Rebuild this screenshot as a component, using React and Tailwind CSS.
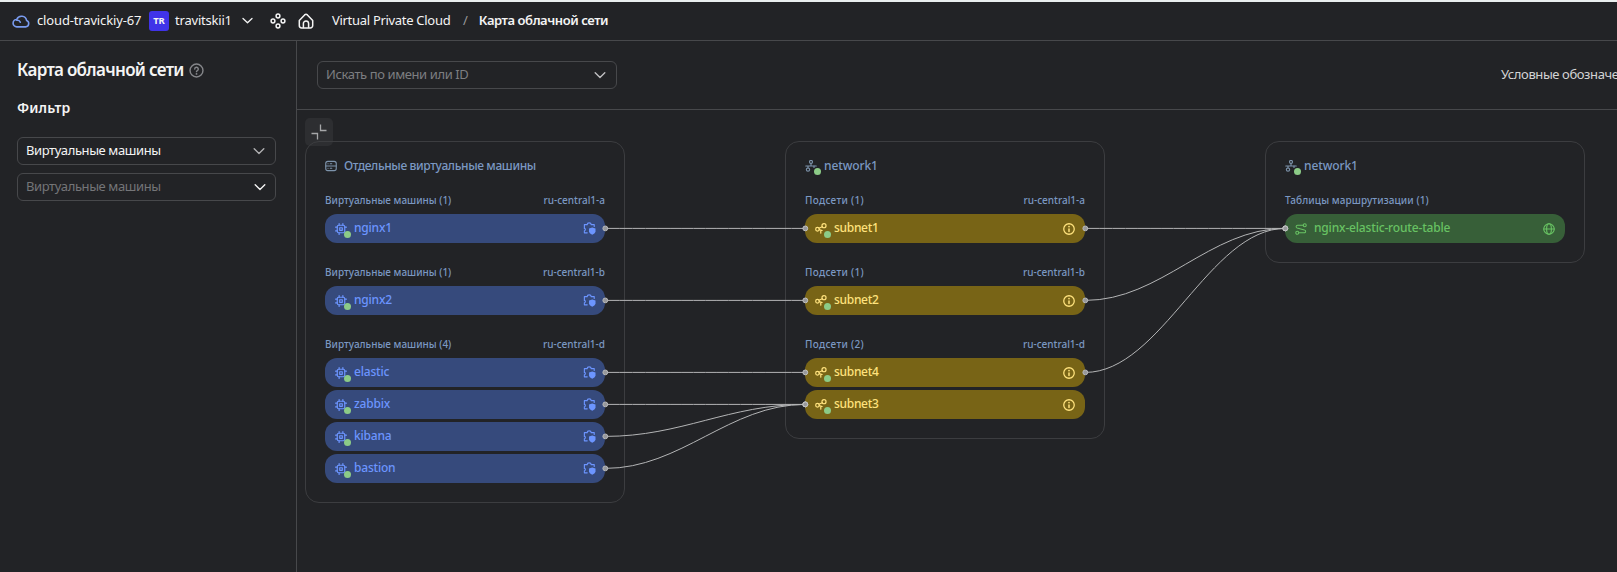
import React from 'react';

const ink = { fill: 'none', stroke: 'currentColor', strokeWidth: 1.4, strokeLinecap: 'round', strokeLinejoin: 'round' };

function Icon({ className = 'size-4', children, ...rest }) {
  return (
    <svg viewBox="0 0 16 16" className={`block shrink-0 ${className}`} {...ink} {...rest}>
      {children}
    </svg>
  );
}

const Chevron = ({ className }) => (
  <Icon className={className}>
    <path d="M3.2 5.8 8 10.4l4.8-4.6" />
  </Icon>
);

const CloudIcon = () => (
  <Icon className="size-[18px] text-[#7a9cf0]">
    <path d="M4.3 13.2h7.800a2.900 2.900 0 0 0 .9-5.600A4.600 4.600 0 0 0 4.200 6.600a3.300 3.300 0 0 0 .1 6.600Z" />
    <path d="M4.300 7.400c1.500-.2 2.700.5 3.100 1.700" />
  </Icon>
);

const ServicesIcon = () => (
  <Icon className="size-4" strokeWidth={1.5}>
    <circle cx="8" cy="3" r="1.9" />
    <circle cx="8" cy="13" r="1.9" />
    <circle cx="3" cy="8" r="1.9" />
    <circle cx="13" cy="8" r="1.9" />
  </Icon>
);

const HomeIcon = () => (
  <Icon className="size-4" strokeWidth={1.5}>
    <path d="M1.3 7.6 6.6 1.9a2 2 0 0 1 2.8 0l5.3 5.7v4.900a2.400 2.400 0 0 1-2.400 2.400H3.700a2.400 2.400 0 0 1-2.400-2.400Z" />
    <path d="M5.400 14.600V10.500a2.600 2.600 0 0 1 5.200 0v4.100" />
  </Icon>
);

const HelpIcon = () => (
  <Icon className="size-[15px] text-[#85868a]" strokeWidth={1.5}>
    <circle cx="8" cy="8" r="6.900" />
    <path d="M6.100 6.400a1.900 1.900 0 1 1 2.800 1.700c-.6.3-.9.6-.9 1.100" />
    <path d="M8 11.500v.1" strokeWidth="1.900" />
  </Icon>
);

const ServerIcon = () => (
  <Icon className="size-3 text-[#7d93ab]" strokeWidth={1.5}>
    <rect x="1" y="1.800" width="14" height="12.400" rx="2.800" />
    <path d="M1 8h14M4 5h.1M4 11h.1M7 5h2M7 11h2" />
  </Icon>
);

const NetworkIcon = () => (
  <Icon className="size-3 text-[#7d93ab]" strokeWidth={1.5}>
    <circle cx="8" cy="2.500" r="2" />
    <path d="M1 8h14M8 4.500V8M4 8v2.500" />
    <circle cx="4" cy="12.800" r="2.200" />
    <path d="M12 8v2" />
  </Icon>
);

const ChipIcon = () => (
  <Icon className="size-3" strokeWidth={1.600}>
    <rect x="3" y="3" width="10" height="10" rx="2" />
    <rect x="6.300" y="6.300" width="3.400" height="3.400" />
    <path d="M5.500 3V.8M10.500 3V.8M5.500 15.200V13M3 5.500H.8M3 10.500H.8M15.200 5.500H13" />
  </Icon>
);

const PuzzleShieldIcon = () => (
  <Icon className="size-[13px]" strokeWidth={1.400}>
    <path d="M5.200 13.300H1.700V10.800c1.600-.2 1.600-2.700 0-2.900V3.200h3.400c.2-2.800 4.800-2.800 5 0h3.700v2.200" />
    <path d="M11.400 6.800 15.400 8v3.400c0 2-1.600 3.300-4 4.300-2.400-1-4-2.300-4-4.300V8Z" fill="currentColor" stroke="none" />
  </Icon>
);

const SubnetIcon = () => (
  <Icon className="size-3" strokeWidth={1.600}>
    <circle cx="3.300" cy="8.300" r="2.400" />
    <circle cx="12" cy="3.600" r="2.700" />
    <path d="M5.400 7.100 9.600 4.900M5.700 8.900 9.500 10M7.600 9.600 7.800 13.500" />
  </Icon>
);

const InfoIcon = () => (
  <Icon className="size-3" strokeWidth={1.700}>
    <circle cx="8" cy="8" r="7" />
    <path d="M8 8v3.300" strokeWidth="2" />
    <path d="M8 4.800v.1" strokeWidth="2.200" />
  </Icon>
);

const RouteIcon = () => (
  <Icon className="size-3" strokeWidth={1.400}>
    <circle cx="13" cy="2.900" r="2" />
    <circle cx="3" cy="13.100" r="2" />
    <path d="M10.800 2.900H3.400a1.900 1.900 0 0 0-.6 3.700l9.800 2.800a1.800 1.800 0 0 1-.5 3.700H5.200" />
  </Icon>
);

const GlobeIcon = () => (
  <Icon className="size-3" strokeWidth={1.500}>
    <circle cx="8" cy="8" r="7" />
    <ellipse cx="8" cy="8" rx="3.200" ry="7" />
    <path d="M1 8h14" />
  </Icon>
);

const kinds = {
  vm: { pill: 'bg-[#364a7c] text-[#6c95ff]', label: '', icon: ChipIcon, end: PuzzleShieldIcon, status: true, name: 'tracking-[-0.2px]' },
  subnet: { pill: 'bg-[#786416] text-[#ffe27d]', label: 'tracking-[0.3px]', icon: SubnetIcon, end: InfoIcon, status: true, name: 'tracking-[-0.3px]' },
  route: { pill: 'bg-[#375f38] text-[#68c263]', label: 'tracking-[0.1px]', icon: RouteIcon, end: GlobeIcon, status: false, name: 'tracking-[-0.17px]' },
};

const StatusDot = () => (
  <span className="absolute -bottom-[3px] -right-[3.5px] size-[7px] rounded-full bg-[#8ccb87]" />
);

function Node({ kind, name }) {
  const { pill, icon: Lead, end: End, status, name: nameClass } = kinds[kind];
  return (
    <div className={`flex h-[29px] items-center rounded-[12px] px-2.5 ${pill}`}>
      <span className="relative flex">
        <Lead />
        {status && <StatusDot />}
      </span>
      <span className={`ml-[7px] pb-0.5 text-[12px] font-medium leading-none ${nameClass}`}>{name}</span>
      <span className="ml-auto flex w-3 justify-center">
        <End />
      </span>
    </div>
  );
}

function Group({ kind, title, zone, nodes }) {
  return (
    <section>
      <div className="flex h-5 items-center justify-between pb-0.5 text-[10px] font-medium leading-none">
        <span className={kinds[kind].label}>{title}</span>
        <span>{zone}</span>
      </div>
      <div className="mt-[3px] flex flex-col gap-[3px]">
        {nodes.map((n) => (
          <Node key={n} kind={kind} name={n} />
        ))}
      </div>
    </section>
  );
}

function Card({ place, icon, title, titleClass, groups }) {
  return (
    <article className={`absolute top-[31px] w-[320px] rounded-[14px] border border-[#3c3d40] px-[19px] pb-[19px] pt-3 text-[#7b98c2] ${place}`}>
      <h3 className="flex h-6 items-center text-[12px] font-medium leading-none">
        {icon}
        <span className={`ml-[7px] ${titleClass}`}>{title}</span>
      </h3>
      <div className="mt-[13px] flex flex-col gap-5">
        {groups.map((g) => (
          <Group key={g.zone || g.title} {...g} />
        ))}
      </div>
    </article>
  );
}

const networkBadge = (
  <span className="relative flex">
    <NetworkIcon />
    <StatusDot />
  </span>
);

const vms = [
  { kind: 'vm', title: 'Виртуальные машины (1)', zone: 'ru-central1-a', nodes: ['nginx1'] },
  { kind: 'vm', title: 'Виртуальные машины (1)', zone: 'ru-central1-b', nodes: ['nginx2'] },
  { kind: 'vm', title: 'Виртуальные машины (4)', zone: 'ru-central1-d', nodes: ['elastic', 'zabbix', 'kibana', 'bastion'] },
];
const subnets = [
  { kind: 'subnet', title: 'Подсети (1)', zone: 'ru-central1-a', nodes: ['subnet1'] },
  { kind: 'subnet', title: 'Подсети (1)', zone: 'ru-central1-b', nodes: ['subnet2'] },
  { kind: 'subnet', title: 'Подсети (2)', zone: 'ru-central1-d', nodes: ['subnet4', 'subnet3'] },
];
const routes = [
  { kind: 'route', title: 'Таблицы маршрутизации (1)', nodes: ['nginx-elastic-route-table'] },
];

const links = [
  [308.3, 118.4, 508.3, 118.4],
  [308.3, 190.4, 508.3, 190.4],
  [308.3, 262.4, 508.3, 262.4],
  [308.3, 294.4, 508.3, 294.4],
  [308.3, 326.4, 508.3, 294.4],
  [308.3, 358.4, 508.3, 294.4],
  [788.3, 118.4, 988.3, 118.4],
  [788.3, 190.4, 988.3, 118.4],
  [788.3, 262.4, 988.3, 118.4],
];

function Links() {
  return (
    <svg className="pointer-events-none absolute left-0 top-0" width="1320" height="462" fill="none">
      {links.map(([x1, y1, x2, y2], i) => {
        const bend = (x2 - x1) * 0.38;
        return <path key={i} d={`M${x1} ${y1}C${x1 + bend} ${y1} ${x2 - bend} ${y2} ${x2} ${y2}`} stroke="#b4b5b6" />;
      })}
      {links.flatMap(([x1, y1, x2, y2], i) => [
        <circle key={`a${i}`} cx={x1} cy={y1} r="2.4" fill="#97989b" stroke="#b9babc" />,
        <circle key={`b${i}`} cx={x2} cy={y2} r="2.4" fill="#97989b" stroke="#c4c5c6" />,
      ])}
    </svg>
  );
}

function Select({ className, children, chevron }) {
  return (
    <div className={`flex h-7 items-center justify-between rounded-[6px] border border-[#47484b] pl-2 text-[13px] leading-none tracking-[-0.4px] ${className}`}>
      <span className="pb-px">{children}</span>
      <Chevron className={`size-4 ${chevron}`} />
    </div>
  );
}

export default function App() {
  return (
    <div className="flex h-[572px] w-[1617px] flex-col overflow-hidden border-t-2 border-[#e9eeee] bg-[#222326] font-['Noto_Sans','Open_Sans',sans-serif] text-[#f4f4f4]">
      <header className="flex h-[39px] shrink-0 items-center whitespace-nowrap border-b border-[#47484b] pb-px pl-3 text-[13px] leading-none">
        <CloudIcon />
        <span className="ml-[7px] w-[104px] pb-px tracking-[-0.15px]">cloud-travickiy-67</span>
        <span className="ml-2 flex size-5 items-center justify-center rounded-[3px] bg-[#4033e8] text-[9.5px] font-bold">TR</span>
        <span className="ml-1.5 w-[56px] pb-px tracking-[-0.2px]">travitskii1</span>
        <Chevron className="ml-[9px] size-[15px]" />
        <span className="ml-[15px]"><ServicesIcon /></span>
        <span className="ml-3"><HomeIcon /></span>
        <span className="ml-[18px] w-[120px] pb-px tracking-[-0.3px]">Virtual Private Cloud</span>
        <span className="ml-[11px] pb-px text-[#98999b]">/</span>
        <span className="ml-[11px] pb-px font-semibold tracking-[-0.44px]">Карта облачной сети</span>
      </header>
      <div className="flex min-h-0 flex-1">
        <aside className="w-[297px] shrink-0 border-r border-[#47484b] px-[17px] pt-[17px]">
          <div className="flex h-6 items-center whitespace-nowrap">
            <h1 className="w-[167px] pb-px text-[17px] font-semibold leading-none tracking-[-0.7px]">Карта облачной сети</h1>
            <span className="ml-[5px]"><HelpIcon /></span>
          </div>
          <h2 className="mt-4 flex h-5 items-center text-[14px] font-semibold leading-none tracking-[0.1px]">Фильтр</h2>
          <Select className="mt-[19px] w-[259px] pr-2" chevron="text-[#b0b0b2]">Виртуальные машины</Select>
          <Select className="mt-2 w-[259px] pr-[7px] text-[#747578]" chevron="text-[#f4f4f4]">Виртуальные машины</Select>
        </aside>
        <main className="flex min-w-0 flex-1 flex-col">
          <div className="flex h-[69px] shrink-0 items-center border-b border-[#47484b] pl-5">
            <Select className="w-[300px] shrink-0 pr-2 text-[#7d7e81]" chevron="text-[#c0c0c2]">Искать по имени или ID</Select>
            <span className="ml-[884px] shrink-0 whitespace-nowrap pb-px text-[13px] leading-none tracking-[-0.4px] text-[#d3d3d4]">Условные обозначения</span>
          </div>
          <div className="relative flex-1 overflow-hidden">
            <button className="absolute left-2 top-2 flex size-7 items-center justify-center rounded-[5px] bg-[#2d2e31] text-[#a6a7a9]">
              <Icon className="size-4" strokeWidth={1.3} strokeLinecap="butt" strokeLinejoin="miter">
                <path d="M9.5 .5v6H15.500M.5 9.500h6v6" />
              </Icon>
            </button>
            <Card place="left-2" icon={<ServerIcon />} title="Отдельные виртуальные машины" titleClass="tracking-[-0.37px]" groups={vms} />
            <Card place="left-[488px]" icon={networkBadge} title="network1" titleClass="tracking-[-0.1px]" groups={subnets} />
            <Card place="left-[968px]" icon={networkBadge} title="network1" titleClass="tracking-[-0.1px]" groups={routes} />
            <Links />
          </div>
        </main>
      </div>
    </div>
  );
}
